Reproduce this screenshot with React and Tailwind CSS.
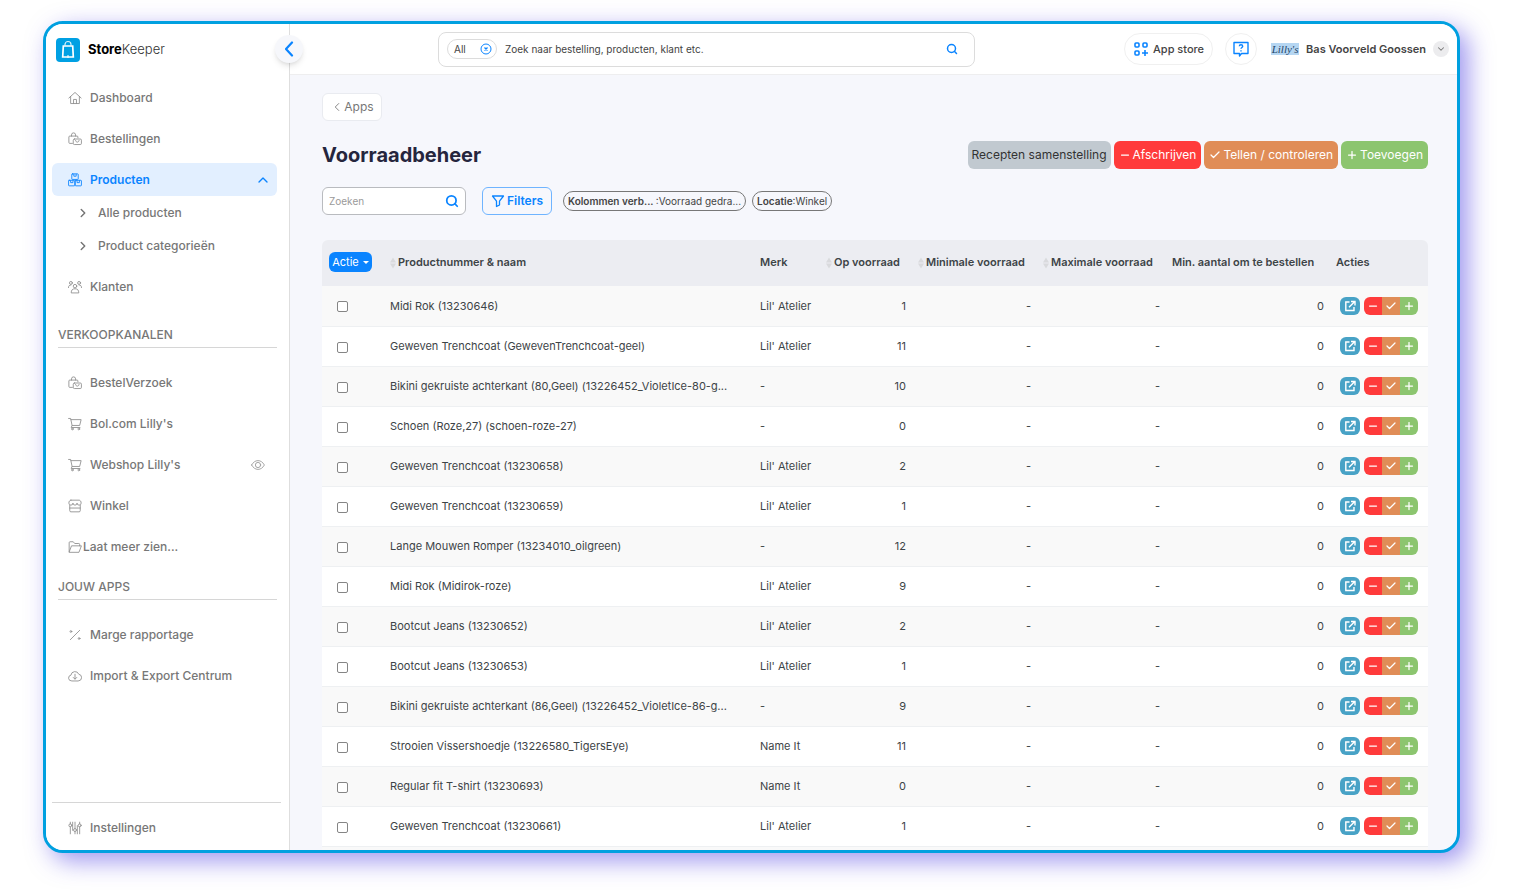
import { useState } from 'react';
import { ChevronRight, ChevronUp, ChevronDown, ChevronLeft, Search, Check, Plus, Minus } from 'lucide-react';

const ICONS = {
  home: <><path d="M1.500 12 12 2.500 22.500 12" /><path d="M4.500 9.500V21.500h15V9.500" /><path d="M9.500 21.500v-7h5v7" /></>,
  orders: <><path d="M7.500 19.500H3a1.500 1.500 0 0 1-1.500-1.500V8.500A1.500 1.500 0 0 1 3 7h12.500A1.500 1.500 0 0 1 17 8.500V10" /><path d="M6 7V5a3.500 3.500 0 0 1 7 0v2" /><rect x="9" y="12" width="14" height="9.500" rx="2" /><path d="M13 14.500c0 4 6 4 6 0" /></>,
  boxes: <><rect x="6.500" y="1.500" width="11" height="9.500" rx="1" /><rect x="1" y="12.500" width="10.500" height="9.500" rx="1" /><rect x="12.500" y="12.500" width="10.500" height="9.500" rx="1" /><path d="M10 2v3.500h4V2M4.500 13v3.500h4V13M15.500 13v3.500h4V13" /></>,
  users: <><circle cx="5" cy="5" r="2.500" /><circle cx="19" cy="5" r="2.500" /><circle cx="12" cy="10.500" r="3" /><path d="M5.500 21.500c0-4 2-6.500 6.500-6.500s6.500 2.500 6.500 6.500z" /><path d="M.8 13c0-3 1.500-4.500 4.200-4.500M23.200 13c0-3-1.500-4.500-4.200-4.500" /></>,
  cart: <><path d="M1 2.500h3.500l2.500 12h13l2.500-10H5" /><path d="M7 14.500 5.500 18h15" /><circle cx="7.500" cy="20.500" r="1.500" /><circle cx="18.500" cy="20.500" r="1.500" /></>,
  store: <><path d="M5 2h14c2 0 3.500 2 3.500 5a3.500 3.500 0 0 1-7 0 3.500 3.500 0 0 1-7 0 3.500 3.500 0 0 1-7 0C1.500 4 3 2 5 2z" /><path d="M3 11v9a2 2 0 0 0 2 2h14a2 2 0 0 0 2-2v-9M3 15.500h18" /></>,
  folder: <><path d="M2 20V4.500a1.500 1.500 0 0 1 1.500-1.500H9l2.500 3h7A1.500 1.500 0 0 1 20 7.500V10" /><path d="M2 20.500 6 10h17l-4 10.500z" /></>,
  percent: <><path d="M20 4 4 20" /><circle cx="5" cy="6" r="1.500" /><circle cx="19" cy="18" r="1.500" /></>,
  cloud: <><path d="M6 20.500a5 5 0 0 1-1-9.900A7 7 0 0 1 18.500 9 5.800 5.800 0 0 1 18 20.500z" /><path d="M12 9v8M9 14.500l3 3 3-3" /></>,
  sliders: <><path d="M4 2v3M4 10v12M12 2v11M12 18v4M20 2v3M20 10v12M8 2v14M16 8v14" /><circle cx="4" cy="7.500" r="2.500" /><circle cx="12" cy="15.500" r="2.500" /><circle cx="20" cy="7.500" r="2.500" /></>,
  eye: <><path d="M1 12c3-5 6.500-7.500 11-7.500S20 7 23 12c-3 5-6.500 7.500-11 7.500S4 17 1 12z" /><circle cx="12" cy="12" r="4.500" /></>,
};

function Icon({ name, className = 'size-3.5' }) {
  return (
    <svg viewBox="0 0 24 24" fill="none" stroke="currentColor" strokeWidth="1.500" strokeLinecap="round" strokeLinejoin="round" className={`shrink-0 ${className}`}>
      {ICONS[name]}
    </svg>
  );
}

const channels = [
  { icon: 'orders', label: 'BestelVerzoek' },
  { icon: 'cart', label: 'Bol.com Lilly\'s' },
  { icon: 'cart', label: 'Webshop Lilly\'s', visible: true },
  { icon: 'store', label: 'Winkel' },
];

const products = [
  { name: 'Midi Rok (13230646)', brand: 'Lil\' Atelier', stock: 1 },
  { name: 'Geweven Trenchcoat (GewevenTrenchcoat-geel)', brand: 'Lil\' Atelier', stock: 11 },
  { name: 'Bikini gekruiste achterkant (80,Geel) (13226452_VioletIce-80-g...', brand: '-', stock: 10 },
  { name: 'Schoen (Roze,27) (schoen-roze-27)', brand: '-', stock: 0 },
  { name: 'Geweven Trenchcoat (13230658)', brand: 'Lil\' Atelier', stock: 2 },
  { name: 'Geweven Trenchcoat (13230659)', brand: 'Lil\' Atelier', stock: 1 },
  { name: 'Lange Mouwen Romper (13234010_oilgreen)', brand: '-', stock: 12 },
  { name: 'Midi Rok (Midirok-roze)', brand: 'Lil\' Atelier', stock: 9 },
  { name: 'Bootcut Jeans (13230652)', brand: 'Lil\' Atelier', stock: 2 },
  { name: 'Bootcut Jeans (13230653)', brand: 'Lil\' Atelier', stock: 1 },
  { name: 'Bikini gekruiste achterkant (86,Geel) (13226452_VioletIce-86-g...', brand: '-', stock: 9 },
  { name: 'Strooien Vissershoedje (13226580_TigersEye)', brand: 'Name It', stock: 11 },
  { name: 'Regular fit T-shirt (13230693)', brand: 'Name It', stock: 0 },
  { name: 'Geweven Trenchcoat (13230661)', brand: 'Lil\' Atelier', stock: 1 },
];

function NavItem({ icon, label, visible }) {
  return (
    <a href="#" className="flex h-[33px] items-center gap-2 px-4 hover:bg-gray-50">
      <Icon name={icon} className="size-3.5 text-[#8f8f8f]" />
      <span>{label}</span>
      {visible && <Icon name="eye" className="ml-auto -mr-1 size-3.5 text-[#9a9a9a]" />}
    </a>
  );
}

function SubItem({ label }) {
  return (
    <a href="#" className="flex h-[33px] items-center gap-2 pl-6">
      <ChevronRight className="size-3.5" strokeWidth={2.5} />
      {label}
    </a>
  );
}

function SortArrows() {
  return (
    <svg viewBox="0 0 6 12" className="mr-0.5 inline-block h-3 w-1.5 align-middle" fill="#d9dadd">
      <path d="M3 0.500 6 5.500H0zM3 11.500 0 6.500h6z" />
    </svg>
  );
}

function Sidebar() {
  return (
    <aside className="relative flex w-[244px] shrink-0 flex-col border-r border-[#dedede] bg-white text-xs font-medium text-[#777777]">
      <a href="#" className="flex h-[51px] items-center gap-2 pl-2.5 text-[13px] text-black">
        <svg viewBox="0 0 24 24" className="size-6">
          <rect width="24" height="24" rx="4" fill="#00a0e3" />
          <path d="M9 7.500V6.500a3 3 0 0 1 6 0V7.500" fill="none" stroke="#d8f1fb" strokeWidth="1.200" />
          <path d="M7.300 8h9.400l.6 11H6.700z" fill="none" stroke="#fff" strokeWidth="1.700" />
          <path d="M12 17v3" stroke="#fff" strokeWidth="1" />
        </svg>
        <span><span className="font-bold">Store</span><span className="font-light text-[#333333]">Keeper</span></span>
      </a>
      <button aria-label="Menu inklappen" className="absolute top-[11px] -right-3.5 z-10 flex size-7 items-center justify-center rounded-full bg-[#f6f7fb] text-[#0a84ff] shadow-md">
        <svg viewBox="0 0 10 16" className="h-4 w-2.5" fill="none" stroke="currentColor" strokeWidth="2.200" strokeLinecap="round" strokeLinejoin="round">
          <path d="M8 1.500 2 8l6 6.500" />
        </svg>
      </button>

      <nav className="flex grow flex-col pt-1.5">
        <div className="mr-3 ml-1.5 flex flex-col gap-2">
          <NavItem icon="home" label="Dashboard" />
          <NavItem icon="orders" label="Bestellingen" />
          <div>
            <a href="#" className="flex h-[33px] items-center gap-2 rounded-md bg-[#e2efff] pr-1.5 pl-4 font-semibold text-[#0a84ff]">
              <Icon name="boxes" />
              Producten
              <ChevronUp className="ml-auto size-4" strokeWidth={2} />
            </a>
            <SubItem label="Alle producten" />
            <SubItem label="Product categorieën" />
          </div>
          <NavItem icon="users" label="Klanten" />
        </div>

        <h2 className="mt-6 mr-3 ml-3 border-b border-[#d6d6d6] pb-1 leading-4">VERKOOPKANALEN</h2>
        <div className="mt-[18px] mr-3 ml-1.5 flex flex-col gap-2">
          {channels.map((c) => <NavItem key={c.label} {...c} />)}
          <a href="#" className="flex h-[33px] items-center gap-px pl-4">
            <Icon name="folder" className="size-3.5 text-[#8f8f8f]" />
            Laat meer zien...
          </a>
        </div>

        <h2 className="mt-4 mr-3 ml-3 border-b border-[#d6d6d6] pb-1 leading-4">JOUW APPS</h2>
        <div className="mt-[18px] mr-3 ml-1.5 flex flex-col gap-2">
          <NavItem icon="percent" label="Marge rapportage" />
          <NavItem icon="cloud" label="Import & Export Centrum" />
        </div>

        <div className="mt-auto mr-2 ml-1.5 border-t border-[#d6d6d6] pt-2 pb-1.5">
          <NavItem icon="sliders" label="Instellingen" />
        </div>
      </nav>
    </aside>
  );
}

function TopBar() {
  return (
    <header className="flex h-[51px] shrink-0 items-center border-b border-[#eeeeef] bg-white pr-2 pl-[148px] text-[11px] text-[#444444]">
      <div className="flex h-[35px] w-[537px] items-center rounded-lg border border-[#dcdcdc] px-2">
        <button className="flex h-5 w-[50px] shrink-0 items-center justify-between rounded-full border border-[#dcdcdc] pr-1 pl-1.5 text-[10px]">
          All
          <svg viewBox="0 0 12 12" className="size-3" fill="none" stroke="#0a84ff">
            <circle cx="6" cy="6" r="5" />
            <path d="m4.500 4.500 3 3m0-3-3 3" strokeWidth="1.300" />
          </svg>
        </button>
        <input aria-label="Zoeken in StoreKeeper" placeholder="Zoek naar bestelling, producten, klant etc." className="ml-2 min-w-0 grow text-[10px] outline-none placeholder:text-[#444444]" />
        <button aria-label="Zoek" className="mr-2 text-[#0a84ff]"><Search className="size-3" strokeWidth={3} /></button>
      </div>
      <div className="ml-auto flex items-center">
        <button className="flex h-8 items-center gap-1 rounded-full border border-[#f0f0f0] px-2 font-medium">
          <svg viewBox="0 0 16 16" className="size-4" fill="none" stroke="#0a84ff" strokeWidth="1.600">
            <rect x="2" y="2" width="4" height="4" rx="1" />
            <rect x="10" y="2" width="4" height="4" rx="1" />
            <rect x="2" y="10" width="4" height="4" rx="1" />
            <path d="M12 9v6M9 12h6" />
          </svg>
          App store
        </button>
        <button aria-label="Help" className="ml-3 flex size-8 items-center justify-center rounded-full border border-[#f0f0f0]">
          <svg viewBox="0 0 16 16" className="size-4" fill="none" stroke="#0a84ff" strokeWidth="1.400" strokeLinejoin="round">
            <path d="M1 1.500h14v11H8.500L6.500 15v-2.500H1z" />
            <path d="M6.300 5.300c0-2 3.400-2 3.400 0 0 1.200-1.700 1.200-1.700 2.500M8 9.200v1.200" />
          </svg>
        </button>
        <button className="ml-3.5 flex items-center gap-[7px] font-semibold">
          <span className="flex h-3 w-7 items-center justify-center bg-[#b5d6f2] font-['Liberation_Serif',serif] text-[11px] font-normal text-[#25476b] italic">Lilly's</span>
          Bas Voorveld Goossen
          <span className="flex size-4 items-center justify-center rounded-full bg-[#ececee]">
            <ChevronDown className="size-2.5 text-[#777777]" strokeWidth={2.5} />
          </span>
        </button>
      </div>
    </header>
  );
}

function ProductRow({ product, checked, onToggle }) {
  return (
    <tr className="h-10 border-b border-[#eef0f2] bg-white odd:bg-[#f9f9f9]">
      <td className="pl-[15px]">
        <input
          type="checkbox"
          aria-label={product.name}
          checked={checked}
          onChange={onToggle}
          className="mt-0.5 block size-[11px] appearance-none rounded-xs border border-[#858585] bg-white checked:bg-[#0a84ff]"
        />
      </td>
      <td className="truncate pl-2">{product.name}</td>
      <td className="pl-2">{product.brand}</td>
      <td className="pr-1 text-right">{product.stock}</td>
      <td className="pr-1 text-right">-</td>
      <td className="pr-1 text-right">-</td>
      <td className="pr-1 text-right">0</td>
      <td className="pl-3">
        <div className="flex gap-1 text-white">
          <button aria-label="Openen" className="flex h-[18px] w-5 items-center justify-center rounded-md bg-[#48a2c6]">
            <svg viewBox="0 0 12 12" className="size-3" fill="none" stroke="currentColor" strokeWidth="1.400">
              <path d="M5.500 2H1.800v8.500h8.200V7M5 7.200 10 2.200M7 1.500h4v4" />
            </svg>
          </button>
          <div className="flex overflow-hidden rounded-md">
            <button aria-label="Afschrijven" className="flex h-[18px] w-[18px] items-center justify-center bg-[#ff3b3b]"><Minus className="size-3" strokeWidth={2.5} /></button>
            <button aria-label="Tellen" className="flex h-[18px] w-[18px] items-center justify-center bg-[#e08d57]"><Check className="size-3" strokeWidth={2.5} /></button>
            <button aria-label="Toevoegen" className="flex h-[18px] w-[18px] items-center justify-center bg-[#8cc56f]"><Plus className="size-3" strokeWidth={2.5} /></button>
          </div>
        </div>
      </td>
    </tr>
  );
}

export default function App() {
  const [selected, setSelected] = useState([]);

  const toggle = (index) => {
    setSelected((prev) => (prev.includes(index) ? prev.filter((i) => i !== index) : [...prev, index]));
  };

  return (
    <div className="h-screen bg-white pt-[21px] pr-[59px] pb-[39px] pl-[43px] font-['Inter',sans-serif]">
      <div className="flex h-full overflow-hidden rounded-[20px] border-3 border-[#00a0e0] bg-[#f6f7fc] shadow-[8px_8px_24px_0_rgba(80,65,225,0.55)]">
        <Sidebar />
        <div className="flex min-w-0 grow flex-col">
          <TopBar />
          <main className="min-h-0 grow overflow-hidden pt-[18px] pr-[29px] pl-8">
            <a href="#" className="flex h-7 w-[60px] items-center justify-center rounded-md border border-[#e9ebf0] bg-white text-xs text-[#777777]">
              <ChevronLeft className="size-3.5" strokeWidth={1.5} />
              Apps
            </a>

            <div className="mt-5 flex items-center justify-between">
              <h1 className="text-xl leading-7 font-bold text-[#25253d]">Voorraadbeheer</h1>
              <div className="flex gap-[3px] text-xs text-white">
                <button className="h-7 rounded-md bg-[#c1c9d0] px-1 text-[#333333]">Recepten samenstelling</button>
                <button className="flex h-7 items-center gap-0.5 rounded-md bg-[#ff3b3b] px-[5px]"><Minus className="size-3" strokeWidth={2.5} />Afschrijven</button>
                <button className="flex h-7 items-center gap-0.5 rounded-md bg-[#e08d57] px-[5px]"><Check className="size-3" strokeWidth={2.5} />Tellen / controleren</button>
                <button className="flex h-7 items-center gap-0.5 rounded-md bg-[#8cc56f] px-[5px]"><Plus className="size-3" strokeWidth={2.5} />Toevoegen</button>
              </div>
            </div>

            <div className="mt-[18px] flex items-center text-[10px] text-[#444444]">
              <div className="flex h-7 w-36 items-center rounded-md border border-[#b9bbbf] bg-white px-1.5">
                <input aria-label="Zoeken" placeholder="Zoeken" className="min-w-0 grow outline-none placeholder:text-[#9a9a9a]" />
                <button aria-label="Zoek producten" className="text-[#0a84ff]"><Search className="size-3.5" strokeWidth={3} /></button>
              </div>
              <button className="ml-4 flex h-7 w-[70px] items-center justify-center gap-0.5 rounded-md border border-[#6fb4ff] text-xs font-semibold text-[#0a84ff]">
                <svg viewBox="0 0 14 14" className="size-3.5" fill="none" stroke="currentColor" strokeWidth="1.300" strokeLinejoin="round">
                  <path d="M1.500 2h11L8.500 7.200v3.800l-3 1.500V7.200z" />
                </svg>
                Filters
              </button>
              <button className="ml-[11px] h-5 rounded-full border border-[#777777] px-1"><span className="font-semibold">Kolommen verb... </span>:Voorraad gedra...</button>
              <button className="ml-1.5 h-5 rounded-full border border-[#777777] px-1"><span className="font-semibold">Locatie</span>:Winkel</button>
            </div>

            <div className="mt-[25px] overflow-hidden rounded-t-md">
              <table className="w-full table-fixed text-[11px] text-[#3d4447]">
                <colgroup>
                  <col className="w-[60px]" />
                  <col />
                  <col className="w-[68px]" />
                  <col className="w-[90px]" />
                  <col className="w-[125px]" />
                  <col className="w-[129px]" />
                  <col className="w-[164px]" />
                  <col className="w-[100px]" />
                </colgroup>
                <thead className="bg-[#ecedf2] text-left">
                  <tr className="h-[46px] whitespace-nowrap *:pb-0.5 *:font-semibold">
                    <th className="pl-[7px]">
                      <button className="flex h-5 w-[43px] items-center justify-center gap-1 rounded-md bg-[#0a84ff] text-[11px] font-normal text-white">
                        Actie
                        <svg viewBox="0 0 6 3" className="h-[3px] w-1.5" fill="currentColor"><path d="M0 0h6L3 3z" /></svg>
                      </button>
                    </th>
                    <th className="pl-2"><SortArrows />Productnummer & naam</th>
                    <th className="pl-2">Merk</th>
                    <th className="pl-1.5"><SortArrows />Op voorraad</th>
                    <th className="pl-2"><SortArrows />Minimale voorraad</th>
                    <th className="pl-2"><SortArrows />Maximale voorraad</th>
                    <th className="pl-2">Min. aantal om te bestellen</th>
                    <th className="pl-2">Acties</th>
                  </tr>
                </thead>
                <tbody>
                  {products.map((product, index) => (
                    <ProductRow
                      key={index}
                      product={product}
                      checked={selected.includes(index)}
                      onToggle={() => toggle(index)}
                    />
                  ))}
                  <tr className="h-10 bg-[#f9f9f9]"><td colSpan={8} /></tr>
                </tbody>
              </table>
            </div>
          </main>
        </div>
      </div>
    </div>
  );
}
